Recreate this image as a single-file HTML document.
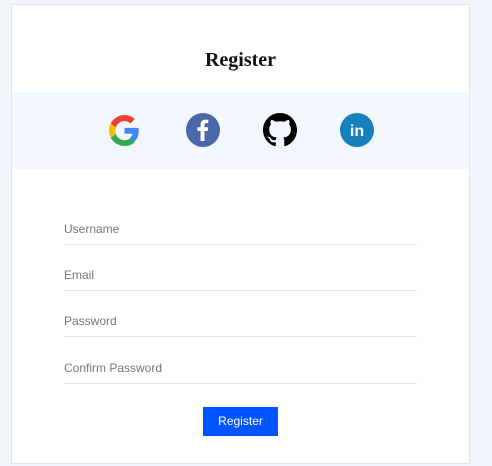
<!DOCTYPE html>
<html><head><style>
body{margin:0;width:492px;height:466px;background:#f1f5fc;position:relative;font-family:"Liberation Sans",sans-serif;overflow:hidden}
.card{position:absolute;left:11px;top:4px;width:457px;height:458px;background:#fff;border:1px solid #dfe4ee}
.title{position:absolute;left:0;width:100%;top:44px;text-align:center;font-family:"Liberation Serif",serif;font-weight:bold;font-size:20px;color:#111}
.band{position:absolute;left:0;top:87px;width:100%;height:77px;background:#f2f6fd}
.ic{position:absolute;top:21px;width:34px;height:34px}
.f{position:absolute;left:52px;width:353px;height:46px;border-bottom:1px solid #e3e3e3}
.f span{position:absolute;left:0;bottom:8px;font-size:12px;color:#777}
.btn{position:absolute;left:191px;top:402px;width:75px;height:29px;background:#0055fe;color:#fff;font-size:12px;text-align:center;line-height:29px}
</style></head><body>
<div class="card">
<div class="title">Register</div>
<div class="band">
<svg class="ic" style="left:97px;top:23px;width:31px;height:31px" viewBox="0 0 48 48"><path fill="#EA4335" d="M24 9.5c3.5 0 6.6 1.2 9.1 3.6l6.8-6.8C35.8 2.4 30.3 0 24 0 14.6 0 6.6 5.4 2.6 13.3l7.9 6.2C12.4 13.7 17.7 9.5 24 9.5z"/><path fill="#4285F4" d="M46.1 24.5c0-1.6-.1-3.1-.4-4.5H24v9h12.4c-.5 2.9-2.2 5.3-4.6 7l7.2 5.6c4.2-3.9 7.1-9.7 7.1-17.1z"/><path fill="#FBBC05" d="M10.5 28.6c-.5-1.4-.8-3-.8-4.6s.3-3.2.8-4.6l-7.9-6.2C.9 16.5 0 20.1 0 24s.9 7.5 2.6 10.8l7.9-6.2z"/><path fill="#34A853" d="M24 48c6.5 0 11.9-2.1 15.9-5.8l-7.2-5.6c-2.2 1.5-5 2.4-8.7 2.4-6.3 0-11.6-4.2-13.5-10l-7.9 6.2C6.6 42.6 14.6 48 24 48z"/></svg>
<svg class="ic" style="left:174px" viewBox="0 0 34 34"><circle cx="17" cy="17" r="17" fill="#4a68a8"/><path fill="#fff" d="M18.5 28V18h3.2l.5-3.8h-3.7v-2.3c0-1.1.3-1.8 1.8-1.8h2V6.8c-.4 0-1.5-.2-2.9-.2-2.9 0-4.8 1.8-4.8 5v2.7h-3.2V18h3.2v10z"/></svg>
<svg class="ic" style="left:251px" viewBox="0 0 16 16"><path fill="#000" d="M8 0C3.58 0 0 3.58 0 8c0 3.54 2.29 6.530 5.470 7.59.4.07.55-.17.55-.38 0-.19-.01-.82-.01-1.49-2.01.37-2.53-.49-2.69-.94-.09-.23-.48-.94-.82-1.130-.28-.15-.68-.52-.01-.53.63-.01 1.08.58 1.23.82.72 1.21 1.87.87 2.33.66.07-.52.28-.87.51-1.070-1.78-.2-3.64-.89-3.64-3.95 0-.87.31-1.59.82-2.15-.08-.2-.36-1.02.08-2.12 0 0 .67-.21 2.2.82.64-.18 1.32-.27 2-.27s1.36.09 2 .27c1.53-1.04 2.2-.82 2.2-.82.44 1.1.16 1.92.08 2.12.51.56.82 1.27.82 2.15 0 3.07-1.87 3.75-3.65 3.95.29.25.54.73.54 1.48 0 1.07-.01 1.93-.01 2.2 0 .21.15.46.55.38A8.01 8.01 0 0016 8c0-4.42-3.58-8-8-8z"/></svg>
<svg class="ic" style="left:328px" viewBox="0 0 34 34"><circle cx="17" cy="17" r="17" fill="#1581b8"/><text x="17" y="23" text-anchor="middle" font-family="Liberation Sans" font-weight="bold" font-size="16" fill="#fff">in</text></svg>
</div>
<div class="f" style="top:193px"><span>Username</span></div>
<div class="f" style="top:239px"><span>Email</span></div>
<div class="f" style="top:285px"><span>Password</span></div>
<div class="f" style="top:332px"><span>Confirm Password</span></div>
<div class="btn">Register</div>
</div>
</body></html>
